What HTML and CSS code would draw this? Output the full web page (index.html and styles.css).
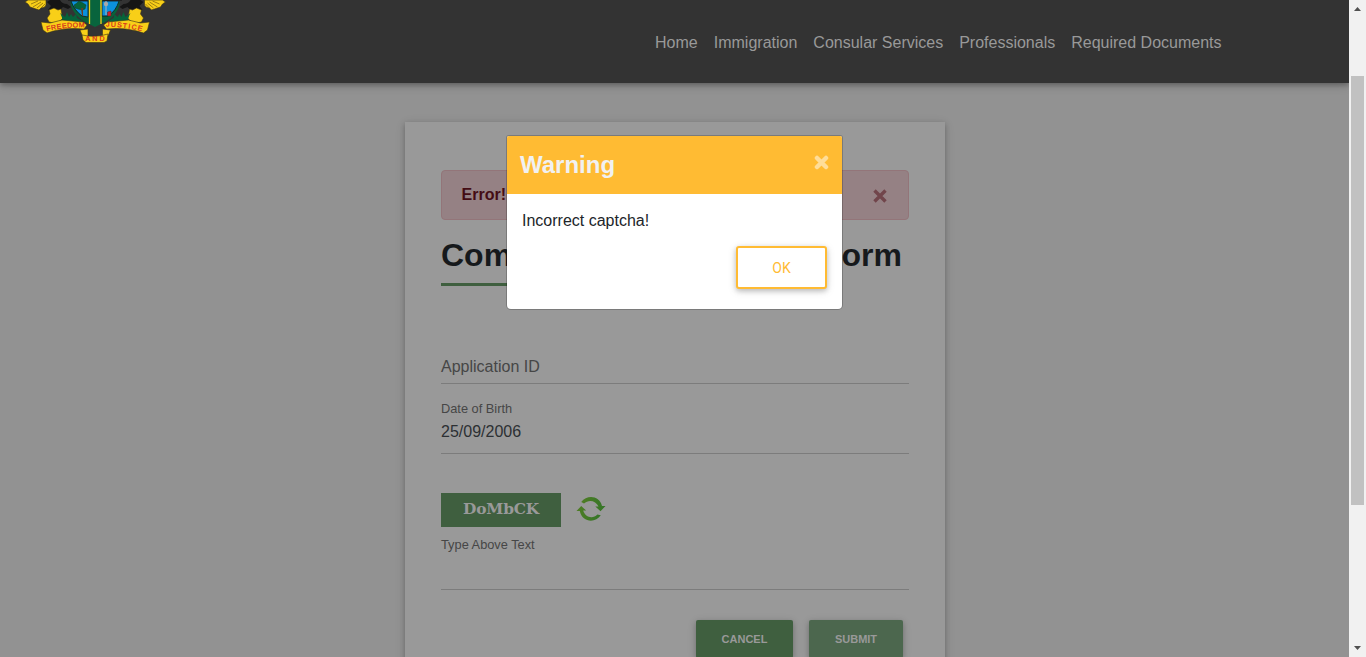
FILE: index.html
```html
<!DOCTYPE html>
<html lang="en">
<head>
<meta charset="utf-8">
<title>Application Form</title>
<link rel="stylesheet" href="styles.css">
</head>
<body>
<div class="page">
  <header class="header">
    <svg class="crest" width="150" height="46" viewBox="20 0 150 46" role="img" aria-label="Coat of arms">
      <defs>
        <path id="left-motto" d="M47 31.3 Q64 27 84.5 27.2"/>
        <path id="right-motto" d="M106 26.500 Q126 27 143 31.500"/>
        <g id="eagle-side">
          <path d="M25 2 L28 0 H46 V5 Q45 8 41 8 L39 10 L36 9 L33 8 L30 7 L28 4Z" fill="#f8cf18" stroke="#3b3215" stroke-width=".6"/>
          <path d="M31 4 L38 1 M33 7 L41 2 M37 8 L43 3 M41 8 L45 4" stroke="#7a5e10" stroke-width=".7"/>
          <path d="M47 2 L50 0 H60 Q62 4 67 4 L71 7 L68 9 L63 7 L60 10 L54 9 L48 10 L51 6Z" fill="#151515"/>
          <path d="M49 10 L54 8 L58 10 L61 9 L62 15 L63 18 Q58 25 49 22 L47 18 L50 14Z" fill="#f8cf18" stroke="#3b3215" stroke-width=".6"/>
          <path d="M62 22 Q63 18 60 13 L65 17 L67 12 L69 17 L71 14 L73 17 L76 14 L77 18 L84 22 V25 L62 24Z" fill="#07633b"/>
          <path d="M41 22 L50 23 L62 20 L83 22 L87 25 L84 29 Q64 27 47 33 L43 30Z" fill="#f8cf18" stroke="#3b3215" stroke-width=".6"/>
          <path d="M80 30 L88 29 L88 37 L85 39 L82 35Z" fill="#f8cf18" stroke="#3b3215" stroke-width=".6"/>
        </g>
      </defs>
      <use href="#eagle-side"/>
      <use href="#eagle-side" transform="translate(190.500 0) scale(-1 1)"/>
      <path d="M70 0 H120 Q119 19 95 26 Q72 19 70 0Z" fill="#07633b"/>
      <path d="M71 1 H88 V17 L82 16 Q74 10 71 1Z M102 1 H119 Q116 11 108 16 L102 16Z" fill="#0b91dc" stroke="#161616" stroke-width=".8"/>
      <path d="M74 5 L77 3 L79 1 L83 3 L86 5 L85 9 L82 10 L78 9 L75 8Z" fill="#07633b" stroke="#143c26" stroke-width=".5"/>
      <path d="M81 8 L83 8 V16 H82Z" fill="#663d26"/>
      <path d="M106 1 V15" stroke="#a6b5bd" stroke-width="1"/>
      <circle cx="106" cy="4" r="2.200" fill="#a7a9aa"/>
      <path d="M107.500 12 L111 11 V16 H107.500Z" fill="#d51e2b" stroke="#522" stroke-width=".5"/>
      <path d="M89 0 H101 V24 L95 27 L89 24Z" fill="#08643d"/>
      <path d="M89.500 0 V24 M101 0 V24" stroke="#f8cf18" stroke-width="1.300"/>
      <path d="M68 .5 H88 M103 .5 H122" stroke="#202020" stroke-width="1"/>
      <path d="M82 35 Q95 38 108 34 L107 41 L104 42.500 H86 L83 40Z" fill="#f8cf18" stroke="#3b3215" stroke-width=".6"/>
      <path d="M90 28 L95 27 L101 28 L100 35 H90Z" fill="#333"/>
      <g class="motto">
        <text><textPath href="#left-motto" textLength="38">FREEDOM</textPath></text>
        <text><textPath href="#right-motto" textLength="36">JUSTICE</textPath></text>
        <text x="85.500" y="41.200" textLength="19">AND</text>
      </g>
    </svg>
    <nav class="nav">
      <a>Home</a><a>Immigration</a><a>Consular Services</a><a>Professionals</a><a>Required Documents</a>
    </nav>
  </header>
  <main class="card">
    <div class="alert"><strong>Error!</strong>
      <svg class="alert-close" width="14" height="14" viewBox="0 0 14 14"><path d="M1.500 1.500 L12.500 12.500 M12.500 1.500 L1.500 12.500"/></svg>
    </div>
    <h1 class="title"><span>Complete</span> <span>Form</span></h1>
    <div class="title-rule"></div>
    <div class="field field-id">Application ID</div>
    <div class="field field-date"><label class="label">Date of Birth</label><span class="value">25/09/2006</span></div>
    <div class="captcha">
      <div class="captcha-code">DoMbCK</div>
      <svg width="30" height="28" viewBox="0 0 30 28">
        <defs><linearGradient id="leaf"><stop stop-color="#4f7d24"/><stop offset="1" stop-color="#347528"/></linearGradient></defs>
        <g fill="url(#leaf)">
          <path d="M5.200 7 C11 -.5 23.500 .5 26 11 H29.500 L24.500 16.200 L19.300 11.500 H22.500 C20 5.500 12.500 4 8 8.500Z"/>
          <path d="M24.800 20.200 C19.500 28.500 6 27.500 3.800 16 H.5 L5.200 11 L10.200 15.600 H7.200 C9 22.500 17 24.500 21.300 19.500Z"/>
        </g>
      </svg>
    </div>
    <div class="field field-captcha"><label class="label">Type Above Text</label></div>
    <div class="actions"><button class="btn cancel">CANCEL</button><button class="btn submit">SUBMIT</button></div>
  </main>
</div>
<aside class="scrollbar">
  <svg width="17" height="17" viewBox="0 0 17 17"><path d="M5 11 H12 L8.500 7Z" fill="#505050"/></svg>
  <div class="thumb"></div>
  <svg class="down" width="17" height="17" viewBox="0 0 17 17"><path d="M5 6 H12 L8.500 10Z" fill="#505050"/></svg>
</aside>
<section class="modal" role="dialog">
  <div class="modal-header"><h2>Warning</h2>
    <svg width="15" height="15" viewBox="0 0 15 15"><path d="M3 3 L12 12 M12 3 L3 12"/></svg>
  </div>
  <div class="modal-body"><p>Incorrect captcha!</p><button class="ok">OK</button></div>
</section>
</body>
</html>
```

FILE: styles.css
```css
* { box-sizing: border-box; }
body {
  margin: 0;
  height: 657px;
  overflow: hidden;
  display: flex;
  background: #929292;
  font: 16px/24px "Liberation Sans", Arial, sans-serif;
  color: #16191c;
}
h1, h2, p { margin: 0; }
button { font-family: Roboto, sans-serif; border: 0; padding: 0; }
.page { width: 1349px; height: 657px; overflow: hidden; }
.header {
  height: 83px;
  padding: 0 127.5px 0 20px;
  display: flex;
  justify-content: space-between;
  align-items: flex-start;
  background: #333;
  box-shadow: 0 2px 5px rgba(0,0,0,.26), 0 2px 10px rgba(0,0,0,.16);
}
.crest { display: block; }
.motto { font: 7px "Liberation Sans", Arial, sans-serif; fill: #d51e20; stroke: #d51e20; stroke-width: .2; }
.nav { display: flex; gap: 16px; padding-top: 31px; color: #999; white-space: nowrap; }
.card {
  width: 540px;
  height: 580px;
  margin: 39px auto 0 405px;
  padding: 48px 36px 0;
  background: #999;
  box-shadow: 0 2px 5px rgba(0,0,0,.22), 0 2px 10px rgba(0,0,0,.12);
}
.alert {
  height: 50px;
  padding: 0 21px 0 19.5px;
  display: flex;
  align-items: center;
  justify-content: space-between;
  border: 1px solid #937579;
  border-radius: 4px;
  background: #958184;
  color: #440c14;
}
.alert strong { line-height: 24px; }
.alert-close { margin-top: 2px; }
.alert-close path { stroke: #71454b; stroke-width: 3.4; }
.title {
  display: flex;
  justify-content: space-between;
  width: 461px;
  margin-top: 16px;
  font-size: 32px;
  line-height: 38px;
}
.title-rule { width: 120px; height: 3px; margin-top: 9px; background: #3f5f3f; }
.field { border-bottom: 1px solid #7c7c7c; }
.field-id { height: 38px; margin-top: 60px; padding-top: 9px; color: #464646; }
.field-date { height: 70px; padding-top: 15px; }
.label { display: block; font-size: 12.8px; line-height: 20px; color: #464646; }
.value { display: block; line-height: 24px; padding-top: 1px; color: #2c3033; }
.captcha { display: flex; gap: 15px; align-items: center; margin-top: 39px; height: 34px; }
.captcha-code {
  width: 120px;
  height: 34px;
  text-align: center;
  font: bold 15.400px/33px "DejaVu Serif", Georgia, serif;
  letter-spacing: -.2px;
  color: #999;
  background: #3f5f3f;
}
.captcha svg { margin-top: -3px; }
.field-captcha { height: 63px; padding-top: 8px; }
.actions { display: flex; justify-content: flex-end; gap: 16px; padding: 30px 6px 0 0; }
.btn {
  width: 97px;
  height: 38px;
  border-radius: 2px;
  background: #3f5f3f;
  color: #999;
  font: bold 11px/38px "Liberation Sans", Arial, sans-serif;
  box-shadow: 0 2px 5px rgba(0,0,0,.18), 0 2px 10px rgba(0,0,0,.14);
}
.submit { width: 94px; background: #4c674e; }
.scrollbar { width: 17px; height: 657px; display: flex; flex-direction: column; align-items: center; background: #f1f1f1; }
.thumb { width: 13px; height: 429px; margin-top: 59px; background: #c1c1c1; }
.down { margin-top: auto; }
.modal {
  position: absolute;
  left: 507px;
  top: 136px;
  width: 335px;
  height: 173px;
  overflow: hidden;
  background: #fff;
  border-radius: 2px 2px 4px 4px;
  box-shadow: 0 0 0 1px rgba(0,0,0,.2);
}
.modal-header {
  height: 58px;
  padding: 0 13px;
  display: flex;
  align-items: center;
  justify-content: space-between;
  background: #fb3;
}
.modal-header h2 { font-size: 24px; line-height: 30px; color: #f1f1f1; }
.modal-header svg { margin-top: -6px; }
.modal-header path { stroke: #ffdd99; stroke-width: 4.5; stroke-linecap: round; }
.modal-body { display: flex; flex-direction: column; padding: 15px 15px 0; color: #212529; }
.ok {
  align-self: flex-end;
  width: 91px;
  height: 43px;
  margin-top: 13px;
  border: 2px solid #fb3;
  border-radius: 3px;
  background: #fff;
  color: #fb3;
  font-size: 14px;
  box-shadow: 0 2px 5px rgba(0,0,0,.2), 0 2px 10px rgba(0,0,0,.12);
}
```
